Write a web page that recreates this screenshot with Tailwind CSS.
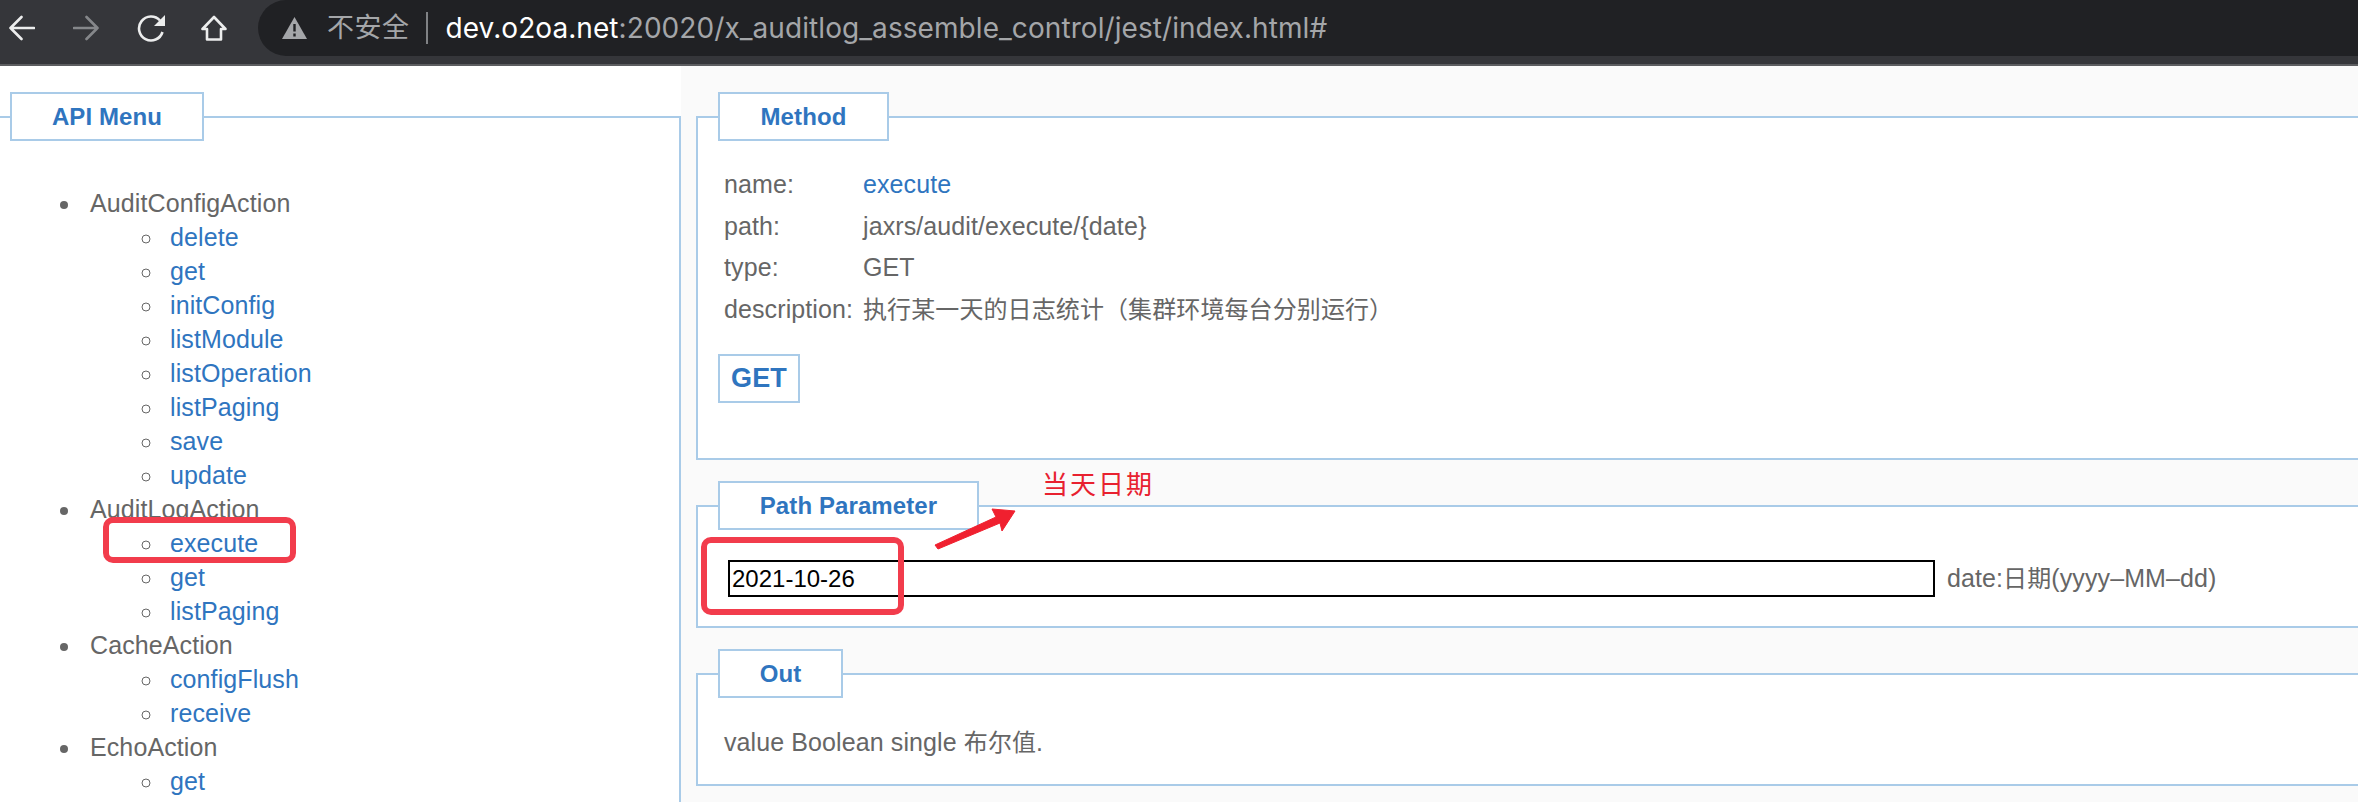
<!DOCTYPE html>
<html lang="en">
<head>
    <meta charset="UTF-8">
    <title>API Menu</title>
    <script src="https://cdn.jsdelivr.net/npm/@tailwindcss/browser@4"></script>
</head>
<body class="relative w-[2358px] h-[802px] overflow-hidden bg-white text-[25px] tracking-[0.1px] text-[#666] font-['Liberation_Sans','Noto_Sans_CJK_SC',sans-serif]">
    <!-- browser toolbar -->
    <header class="flex h-[66px] bg-[#35363a] border-b-2 border-[#5c5d60]">
        <div class="flex w-[258px] h-[56px] items-center pl-[9px] shrink-0">
            <svg class="w-[26px] h-[26px]" viewBox="0 0 26 26" fill="none" stroke="#eceded" stroke-width="2.600" stroke-linecap="round" stroke-linejoin="round"><path d="M1.500 13H25M12.500 2 1.500 13l11 11"/></svg>
            <svg class="w-[26px] h-[26px] ml-[38px]" viewBox="0 0 26 26" fill="none" stroke="#85878a" stroke-width="2.600" stroke-linecap="round" stroke-linejoin="round"><path d="M1 13H24.500M13.500 2l11 11-11 11"/></svg>
            <svg class="w-[28px] h-[28px] ml-[38px]" viewBox="0 0 28 28" fill="none" stroke="#eceded" stroke-width="2.600"><path d="M25.500 18a12 12 0 1 1-2.500-11.500"/><path d="M28 1v11H17Z" fill="#eceded" stroke="none"/></svg>
            <svg class="w-[26px] h-[26px] ml-[36px]" viewBox="0 0 26 26" fill="none" stroke="#eceded" stroke-width="2.600" stroke-linejoin="round"><path d="M13 2 1.500 14H6v10.500h14V14h4.500Z"/></svg>
        </div>
        <div class="flex flex-1 h-[56px] items-center bg-[#202124] rounded-l-[28px] pl-[24px] text-[28px] tracking-[0.07px] font-['Inter','Noto_Sans_CJK_SC',sans-serif]">
            <svg class="w-[25px] h-[22px] shrink-0" viewBox="0 0 25 22"><path d="M12.500 0 25 22H0Z" fill="#a4a6a9"/><path d="M11.300 7h2.400v7.500h-2.400zM11.300 16.500h2.400v3h-2.400z" fill="#202124"/></svg>
            <span class="ml-[20px] text-[#a4a6a9] text-[27px] tracking-[0.5px]">不安全</span>
            <span class="ml-[16px] w-[2px] h-[32px] bg-[#808285]"></span>
            <span class="ml-[18px] text-white">dev.o2oa.net<span class="text-[#a4a6a9]">:20020/x_auditlog_assemble_control/jest/index.html#</span></span>
        </div>
    </header>

    <main class="flex h-[736px]">
        <!-- api menu -->
        <aside class="w-[681px] shrink-0 pt-[50px]">
            <section class="h-full border-t-2 border-r-2 border-[#a9cbe8]">
                <h2 class="flex items-center justify-center relative w-[194px] h-[49px] ml-[10px] -mt-[26px] border-2 border-[#a9cbe8] bg-white text-[#2f75bf] font-bold text-[24px]">API Menu</h2>
                <ul class="list-disc pl-[82px] *:pl-[8px] pt-[45px] leading-[34px]">
                    <li>AuditConfigAction
                        <ul class="list-[circle] pl-[74px] *:pl-[6px]">
                            <li><a class="text-[#2f75bf]" href="#">delete</a></li>
                            <li><a class="text-[#2f75bf]" href="#">get</a></li>
                            <li><a class="text-[#2f75bf]" href="#">initConfig</a></li>
                            <li><a class="text-[#2f75bf]" href="#">listModule</a></li>
                            <li><a class="text-[#2f75bf]" href="#">listOperation</a></li>
                            <li><a class="text-[#2f75bf]" href="#">listPaging</a></li>
                            <li><a class="text-[#2f75bf]" href="#">save</a></li>
                            <li><a class="text-[#2f75bf]" href="#">update</a></li>
                        </ul>
                    </li>
                    <li>AuditLogAction
                        <ul class="list-[circle] pl-[74px] *:pl-[6px]">
                            <li><a class="text-[#2f75bf]" href="#">execute</a></li>
                            <li><a class="text-[#2f75bf]" href="#">get</a></li>
                            <li><a class="text-[#2f75bf]" href="#">listPaging</a></li>
                        </ul>
                    </li>
                    <li>CacheAction
                        <ul class="list-[circle] pl-[74px] *:pl-[6px]">
                            <li><a class="text-[#2f75bf]" href="#">configFlush</a></li>
                            <li><a class="text-[#2f75bf]" href="#">receive</a></li>
                        </ul>
                    </li>
                    <li>EchoAction
                        <ul class="list-[circle] pl-[74px] *:pl-[6px]">
                            <li><a class="text-[#2f75bf]" href="#">get</a></li>
                        </ul>
                    </li>
                </ul>
            </section>
        </aside>

        <!-- method detail -->
        <div class="flex flex-1 flex-col gap-[45px] bg-[#fafafa] pl-[15px] pt-[50px]">
            <section class="h-[344px] border-y-2 border-l-2 border-[#a9cbe8] bg-white">
                <h2 class="flex items-center justify-center relative w-[171px] h-[49px] ml-[20px] -mt-[26px] border-2 border-[#a9cbe8] bg-white text-[#2f75bf] font-bold text-[24px]">Method</h2>
                <dl class="grid grid-cols-[139px_1fr] pl-[26px] pt-[23px] leading-[41.500px]">
                    <dt>name:</dt><dd class="text-[#2f75bf]">execute</dd>
                    <dt>path:</dt><dd>jaxrs/audit/execute/{date}</dd>
                    <dt>type:</dt><dd>GET</dd>
                    <dt>description:</dt><dd class="text-[24px]">执行某一天的日志统计（集群环境每台分别运行）</dd>
                </dl>
                <div class="flex items-center justify-center w-[82px] h-[49px] ml-[20px] mt-[24px] border-2 border-[#a9cbe8] text-[#2f75bf] font-bold text-[27px]">GET</div>
            </section>
            <section class="h-[123px] border-y-2 border-l-2 border-[#a9cbe8] bg-white">
                <h2 class="flex items-center justify-center relative w-[261px] h-[49px] ml-[20px] -mt-[26px] border-2 border-[#a9cbe8] bg-white text-[#2f75bf] font-bold text-[24px]">Path Parameter</h2>
                <div class="flex items-center pl-[30px] pt-[30px]">
                    <input value="2021-10-26" class="w-[1207px] h-[37px] border-2 border-black px-[2px] text-black text-[24px] tracking-normal outline-none">
                    <span class="ml-[12px]">date:<span class="text-[24px]">日期</span>(yyyy–MM–dd)</span>
                </div>
            </section>
            <section class="h-[113px] border-y-2 border-l-2 border-[#a9cbe8] bg-white">
                <h2 class="flex items-center justify-center relative w-[125px] h-[49px] ml-[20px] -mt-[26px] border-2 border-[#a9cbe8] bg-white text-[#2f75bf] font-bold text-[24px]">Out</h2>
                <p class="pl-[26px] pt-[26px]">value Boolean single <span class="text-[24px]">布尔值</span>.</p>
            </section>
        </div>
    </main>

    <!-- red annotations over the screenshot -->
    <div class="absolute left-[103px] top-[517px] w-[193px] h-[46px] border-[6px] border-[#f23c4c] rounded-[10px]"></div>
    <div class="absolute left-[701px] top-[537px] w-[203px] h-[78px] border-[6px] border-[#f23c4c] rounded-[10px]"></div>
    <span class="absolute left-[1042px] top-[467px] text-[26px] leading-[36px] tracking-[2px] text-[#e8212f]">当天日期</span>
    <svg class="absolute left-[930px] top-[505px] w-[90px] h-[50px]" viewBox="930 505 90 50"><path d="M935 545 996 517 992 509 1015 511 1002 531 1000 523 938 549Z" fill="#f0202f" stroke="#f0202f" stroke-linejoin="round"/></svg>
</body>
</html>
